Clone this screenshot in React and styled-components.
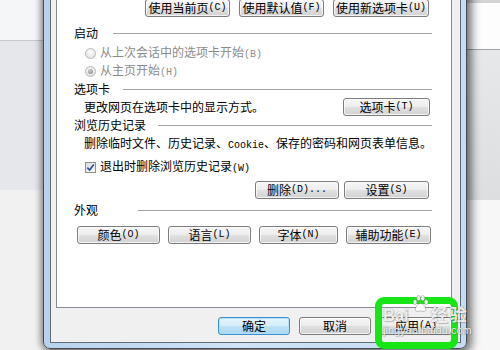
import React from 'react';
import styled, { createGlobalStyle } from 'styled-components';

const Global = createGlobalStyle`
  html, body { margin: 0; padding: 0; background: #f2f2f2; }
  #root { width: 500px; height: 350px; }
`;

const CJK = `"Noto Sans CJK SC", "Noto Sans", sans-serif`;

const Screen = styled.div`
  position: relative;
  width: 500px;
  height: 350px;
  overflow: hidden;
  display: flex;
  align-items: flex-start;
  font-family: ${CJK};
`;

const Strip = styled.div`
  width: ${p => (p.$w ? `${p.$w}px` : 'auto')};
  flex: ${p => (p.$w ? 'none' : '1')};
  height: 350px;
  display: flex;
  flex-direction: column;
`;

const Band = styled.div`
  flex: ${p => (p.$h ? `0 0 ${p.$h}px` : '1')};
  background: ${p => p.$bg};
  border-bottom: ${p => (p.$line ? `1px solid ${p.$line}` : 'none')};
`;

const Win = styled.div`
  position: relative;
  z-index: 1;
  flex: none;
  box-sizing: border-box;
  width: 424px;
  height: 389px;
  margin-top: -40px;
  border: 1px solid #474c54;
  border-radius: 0 0 7px 7px;
  padding: 6px 6px 5px 6px;
  background: linear-gradient(90deg, #b9d2ec 0%, #cfe2f6 45%, #c6dcf2 100%);
  box-shadow: 3px 2px 9px 2px rgba(0, 0, 0, 0.5), -2px 0 7px rgba(0, 0, 0, 0.28);
  display: flex;
`;

const Body = styled.div`
  flex: 1;
  display: flex;
  flex-direction: column;
  border: 1px solid #5f6c7c;
  background: #f0f0f0;
  padding: 0 8px 7px 5px;
`;

const Panel = styled.div`
  flex: 1;
  background: #fff;
  border: 1px solid #898c95;
  padding: 30px 19px 0 17px;
  display: flex;
  flex-direction: column;
`;

const Row = styled.div`
  display: flex;
  align-items: center;
  flex: none;
  height: ${p => p.$h || 18}px;
  margin-top: ${p => p.$mt || 0}px;
  padding-left: ${p => p.$pl || 0}px;
  padding-right: ${p => p.$pr || 0}px;
  justify-content: ${p => p.$justify || 'flex-start'};
  gap: ${p => p.$gap || 0}px;
  font-size: 12px;
  line-height: 16px;
  color: ${p => (p.$muted ? '#8b8b8b' : '#000')};
  white-space: nowrap;
`;

const Heading = styled.div`
  display: grid;
  grid-template-columns: ${p => p.$label}px 1fr;
  align-items: center;
  flex: none;
  height: 16px;
  margin-top: ${p => p.$mt}px;
  font-size: 12px;
  line-height: 16px;
  color: #000;
  white-space: nowrap;
  &::after {
    content: '';
    height: 1px;
    background: #a3a3a3;
  }
`;

const Mono = styled.span`
  font-family: "Liberation Mono", "DejaVu Sans Mono", monospace;
  font-size: 10px;
`;

const Btn = styled.div`
  box-sizing: border-box;
  flex: none;
  width: ${p => p.$w}px;
  height: 18px;
  border-radius: 3px;
  border: 1px solid ${p => (p.$primary ? '#3d8fd0' : '#7d7d7d')};
  background: ${p =>
    p.$primary
      ? 'linear-gradient(#e8f5fd 0%, #d4edfb 48%, #bfe3f7 52%, #a9d6f0 100%)'
      : 'linear-gradient(#f6f6f6 0%, #ededed 48%, #e0e0e0 52%, #d2d2d2 100%)'};
  box-shadow: inset 0 0 0 1px ${p => (p.$primary ? 'rgba(170,225,250,0.9)' : 'rgba(255,255,255,0.7)')};
  display: flex;
  align-items: center;
  justify-content: center;
  font-size: 12px;
  line-height: 16px;
  color: #000;
  white-space: nowrap;
`;

const RadioDot = styled.span`
  box-sizing: border-box;
  flex: none;
  width: 11px;
  height: 11px;
  margin: 0 4px 0 11px;
  border-radius: 50%;
  border: 1px solid #b8b8b8;
  background: radial-gradient(circle at 50% 35%, #fdfdfd 0%, #e6e6e6 70%, #d6d6d6 100%);
  display: flex;
  align-items: center;
  justify-content: center;
  &::after {
    content: '';
    width: 5px;
    height: 5px;
    border-radius: 50%;
    background: ${p => (p.$on ? 'radial-gradient(circle at 40% 35%, #cfcfcf, #7d7d7d)' : 'transparent')};
  }
`;

const CheckBox = styled.span`
  box-sizing: border-box;
  flex: none;
  width: 11px;
  height: 11px;
  margin: 0 4px 0 11px;
  border: 1px solid #8e8f8f;
  background: linear-gradient(135deg, #dcdcdc, #fbfbfb);
  display: flex;
  align-items: center;
  justify-content: center;
`;

const Text = styled.span`
  display: inline-block;
`;

const BottomBar = styled.div`
  display: flex;
  justify-content: flex-end;
  gap: 9px;
  flex: none;
  height: 18px;
  margin-top: 9px;
`;

const Highlight = styled.div`
  position: absolute;
  z-index: 2;
  left: 375px;
  top: 297px;
  width: 83px;
  height: 52px;
  box-sizing: border-box;
  border: 7px solid #16e616;
  border-radius: 9px;
`;

const Watermark = styled.div`
  position: absolute;
  z-index: 3;
  left: 383px;
  top: 293px;
  width: 92px;
  display: flex;
  flex-direction: column;
  color: rgba(255, 255, 255, 0.9);
  text-shadow:
    0 0 1px rgba(80, 80, 80, 0.7),
    1px 1px 1px rgba(80, 80, 80, 0.3);
  pointer-events: none;
`;

const MarkTop = styled.div`
  display: flex;
  align-items: flex-end;
  height: 30px;
`;

const MarkLatin = styled.span`
  font-family: "Liberation Sans", Arial, sans-serif;
  font-weight: bold;
  font-size: 16.5px;
  line-height: 16px;
`;

const MarkCJK = styled.span`
  font-family: ${CJK};
  font-weight: bold;
  font-size: 17px;
  line-height: 18px;
  letter-spacing: 2px;
  margin-left: 1px;
`;

const MarkUrl = styled.span`
  font-family: "Liberation Sans", Arial, sans-serif;
  font-size: 11px;
  line-height: 13px;
  margin-top: 1px;
`;

const Paw = () => (
  <svg width="19" height="19" viewBox="0 0 19 19" style={{ alignSelf: 'flex-start', marginTop: 2, marginLeft: 2 }}>
    <g fill="rgba(255,255,255,0.9)" stroke="rgba(80,80,80,0.5)" strokeWidth="0.7">
      <ellipse cx="4" cy="7" rx="2" ry="2.6" />
      <ellipse cx="7.6" cy="3.2" rx="2" ry="2.6" />
      <ellipse cx="11.8" cy="3.2" rx="2" ry="2.6" />
      <ellipse cx="15.2" cy="7" rx="2" ry="2.6" />
      <path d="M9.6 8.4c-2.6 0-5.2 3.6-5.2 6 0 2.2 2.2 2.4 3.2 2 1-0.4 1.3-0.5 2-0.5s1 0.1 2 0.5c1 0.4 3.2 0.2 3.2-2 0-2.4-2.6-6-5.2-6z" />
    </g>
  </svg>
);

const Check = () => (
  <svg width="9" height="9" viewBox="0 0 9 9">
    <path d="M1.3 4.6 L3.6 7 L7.8 1.4" fill="none" stroke="#2a4f9e" strokeWidth="1.7" />
  </svg>
);

export default function App() {
  return (
    <>
      <Global />
      <Screen>
        <Strip $w={43}>
          <Band $h={40} $bg="#f5f6f7" $line="#c6c9cd" />
          <Band $h={149} $bg="#e5e7ea" />
          <Band $bg="#f1f1f1" />
        </Strip>

        <Win>
          <Body>
            <Panel>
              <Row $h={18} $justify="flex-end" $gap={9} $pr={3}>
                <Btn $w={85}>使用当前页<Mono>(C)</Mono></Btn>
                <Btn $w={85}>使用默认值<Mono>(F)</Mono></Btn>
                <Btn $w={96}>使用新选项卡<Mono>(U)</Mono></Btn>
              </Row>

              <Heading $label={39} $mt={8}><Text>启动</Text></Heading>
              <Row $mt={3} $muted>
                <RadioDot />
                <Text>从上次会话中的选项卡开始<Mono>(B)</Mono></Text>
              </Row>
              <Row $muted>
                <RadioDot $on />
                <Text>从主页开始<Mono>(H)</Mono></Text>
              </Row>

              <Heading $label={49} $mt={1}><Text>选项卡</Text></Heading>
              <Row $mt={1} $pl={10} $pr={2} $justify="space-between">
                <Text>更改网页在选项卡中的显示方式。</Text>
                <Btn $w={87}>选项卡<Mono>(T)</Mono></Btn>
              </Row>

              <Heading $label={84} $mt={1}><Text>浏览历史记录</Text></Heading>
              <Row $mt={2} $pl={10}>
                <Text>删除临时文件、历史记录、<Mono>Cookie</Mono>、保存的密码和网页表单信息。</Text>
              </Row>
              <Row $mt={5}>
                <CheckBox><Check /></CheckBox>
                <Text>退出时删除浏览历史记录<Mono>(W)</Mono></Text>
              </Row>
              <Row $mt={5} $justify="flex-end" $gap={5} $pr={3}>
                <Btn $w={84}>删除<Mono>(D)...</Mono></Btn>
                <Btn $w={85}>设置<Mono>(S)</Mono></Btn>
              </Row>

              <Heading $label={64} $mt={3}><Text>外观</Text></Heading>
              <Row $mt={8} $pl={3} $gap={8}>
                <Btn $w={83}>颜色<Mono>(O)</Mono></Btn>
                <Btn $w={83}>语言<Mono>(L)</Mono></Btn>
                <Btn $w={79}>字体<Mono>(N)</Mono></Btn>
                <Btn $w={85}>辅助功能<Mono>(E)</Mono></Btn>
              </Row>
            </Panel>

            <BottomBar>
              <Btn $w={72} $primary>确定</Btn>
              <Btn $w={72}>取消</Btn>
              <Btn $w={72}>应用<Mono>(A)</Mono></Btn>
            </BottomBar>
          </Body>
        </Win>

        <Strip>
          <Band $h={3} $bg="#d3d3d3" />
          <Band $h={46} $bg="#fdfdfd" $line="#a2a2a2" />
          <Band $h={150} $bg="linear-gradient(#e6e8ea, #dcdee0)" />
          <Band $bg="#f7f7f7" />
        </Strip>

        <Highlight />
        <Watermark>
          <MarkTop>
            <MarkLatin>Bai</MarkLatin>
            <Paw />
            <MarkCJK>经验</MarkCJK>
          </MarkTop>
          <MarkUrl>jingyan.baidu.com</MarkUrl>
        </Watermark>
      </Screen>
    </>
  );
}
